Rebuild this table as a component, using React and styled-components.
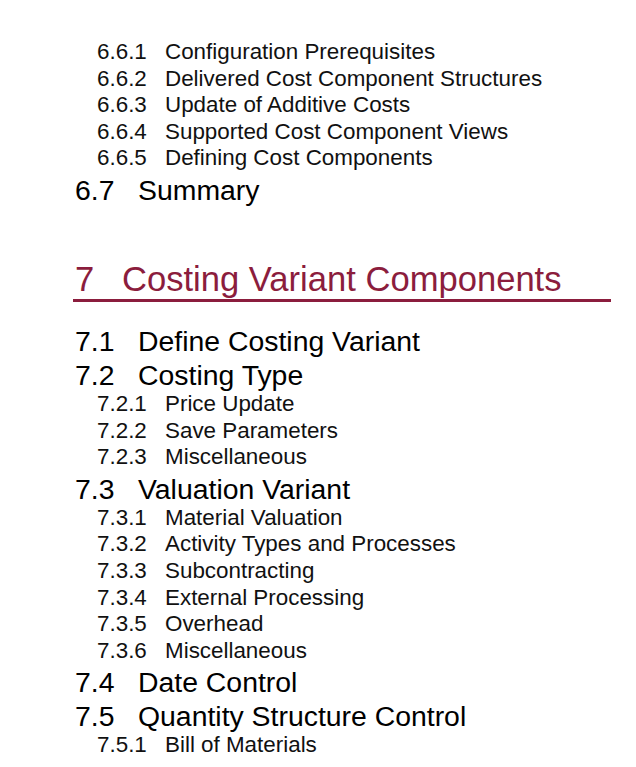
import React from "react";
import styled, { createGlobalStyle } from "styled-components";

const GlobalStyle = createGlobalStyle`
  body {
    margin: 0;
    background: #ffffff;
    font-family: "Liberation Sans", Arial, sans-serif;
  }
`;

export const Page = styled.div`
  padding: 39px 25px 0 75px;
  width: 636px;
  box-sizing: border-box;
  background: #ffffff;
`;

export const Entry = styled.div`
  display: flex;
  align-items: baseline;
  white-space: nowrap;
  color: ${(p) => (p.level === 2 ? "#111111" : "#000000")};
  font-size: ${(p) => (p.level === 2 ? "22.4px" : "28.4px")};
  line-height: ${(p) => (p.level === 2 ? "26.6px" : "32px")};
  margin-top: ${(p) => (p.level === 2 ? "0" : "2px")};
  padding-left: ${(p) => (p.level === 2 ? "22px" : "0")};
`;

export const Num = styled.span`
  flex: none;
  width: ${(p) => (p.level === 2 ? "68px" : "63px")};
`;

export const Chapter = styled.h1`
  display: flex;
  align-items: baseline;
  margin: 53px 0 23px -2px;
  padding-left: 2px;
  font-weight: normal;
  font-size: 34.6px;
  line-height: 40px;
  color: #8b1d3d;
  border-bottom: 3px solid #8b1d3d;
`;

export const ChapterNum = styled.span`
  flex: none;
  width: 47px;
`;

const before = [
  ["6.6.1", "Configuration Prerequisites", 2],
  ["6.6.2", "Delivered Cost Component Structures", 2],
  ["6.6.3", "Update of Additive Costs", 2],
  ["6.6.4", "Supported Cost Component Views", 2],
  ["6.6.5", "Defining Cost Components", 2],
  ["6.7", "Summary", 1],
];

const after = [
  ["7.1", "Define Costing Variant", 1],
  ["7.2", "Costing Type", 1],
  ["7.2.1", "Price Update", 2],
  ["7.2.2", "Save Parameters", 2],
  ["7.2.3", "Miscellaneous", 2],
  ["7.3", "Valuation Variant", 1],
  ["7.3.1", "Material Valuation", 2],
  ["7.3.2", "Activity Types and Processes", 2],
  ["7.3.3", "Subcontracting", 2],
  ["7.3.4", "External Processing", 2],
  ["7.3.5", "Overhead", 2],
  ["7.3.6", "Miscellaneous", 2],
  ["7.4", "Date Control", 1],
  ["7.5", "Quantity Structure Control", 1],
  ["7.5.1", "Bill of Materials", 2],
];

const Row = ({ num, title, level }) => (
  <Entry level={level}>
    <Num level={level}>{num}</Num>
    <span>{title}</span>
  </Entry>
);

const App = () => {
  return (
    <Page>
      <GlobalStyle />
      {before.map(([n, t, l]) => (
        <Row key={n} num={n} title={t} level={l} />
      ))}
      <Chapter>
        <ChapterNum>7</ChapterNum>
        <span>Costing Variant Components</span>
      </Chapter>
      {after.map(([n, t, l]) => (
        <Row key={n} num={n} title={t} level={l} />
      ))}
    </Page>
  );
};

export default App;
